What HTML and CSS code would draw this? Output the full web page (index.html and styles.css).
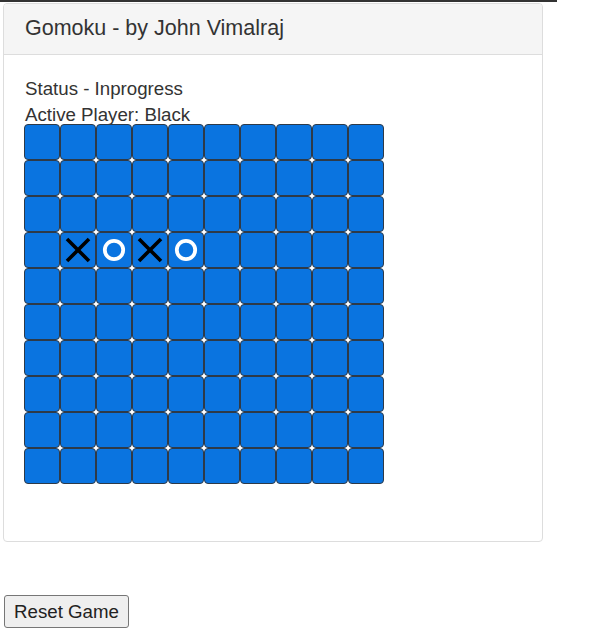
FILE: index.html
```html
<!DOCTYPE html>
<html>
<head>
<meta charset="utf-8">
<link rel="stylesheet" href="styles.css">
</head>
<body>
<div class="topbar"></div>
<div class="card">
  <div class="card-head">Gomoku - by John Vimalraj</div>
  <div class="card-body">
    <div class="line">Status - Inprogress</div>
    <div class="line">Active Player: Black</div>
    <div class="board" id="board"></div>
  </div>
</div>
<button class="reset">Reset Game</button>
<script src="app.js"></script>
</body>
</html>
```
FILE: styles.css
```css
html, body {
  margin: 0;
  padding: 0;
  background: #fff;
  font-family: "Liberation Sans", Arial, sans-serif;
  color: #333;
}
.topbar {
  width: 557px;
  height: 2px;
  background: #333;
}
.card {
  margin: 1px 0 0 3px;
  width: 538px;
  height: 537px;
  border: 1px solid #ddd;
  border-radius: 4px;
  box-sizing: content-box;
}
.card-head {
  height: 50px;
  background: #f5f5f5;
  border-bottom: 1px solid #ddd;
  border-radius: 3px 3px 0 0;
  padding-left: 21px;
  font-size: 21.5px;
  line-height: 48px;
  color: #333;
}
.card-body {
  padding: 21px 20px 0 21px;
}
.line {
  font-size: 18.7px;
  line-height: 26px;
}
.board {
  display: grid;
  grid-template-columns: repeat(10, 36px);
  grid-template-rows: repeat(10, 36px);
  width: 360px;
  margin-top: -4px;
  margin-left: -1px;
}
.cell {
  box-sizing: border-box;
  width: 36px;
  height: 36px;
  background: #0a74e0;
  border: 1px solid #2e3a48;
  border-radius: 4px;
  display: flex;
  align-items: center;
  justify-content: center;
}
.cell svg {
  display: block;
}
.reset {
  margin: 53px 0 0 4px;
  font-family: "Liberation Sans", Arial, sans-serif;
  font-size: 18.7px;
  color: #222;
  background: #efefef;
  border: 1px solid #767676;
  border-radius: 3px;
  height: 33px;
  padding: 0 9px;
}
```
FILE: app.js
```js
var board = document.getElementById('board');
var marks = {31: 'x', 32: 'o', 33: 'x', 34: 'o'};
var X = '<svg width="26" height="26" viewBox="0 0 26 26"><path d="M2 2 L24 24 M24 2 L2 24" stroke="#000" stroke-width="3.6" fill="none"/></svg>';
var O = '<svg width="24" height="24" viewBox="0 0 24 24"><circle cx="12" cy="12" r="9.2" stroke="#fff" stroke-width="3.8" fill="none"/></svg>';
for (var i = 0; i < 100; i++) {
  var c = document.createElement('div');
  c.className = 'cell';
  if (marks[i] === 'x') c.innerHTML = X;
  else if (marks[i] === 'o') c.innerHTML = O;
  board.appendChild(c);
}
```
